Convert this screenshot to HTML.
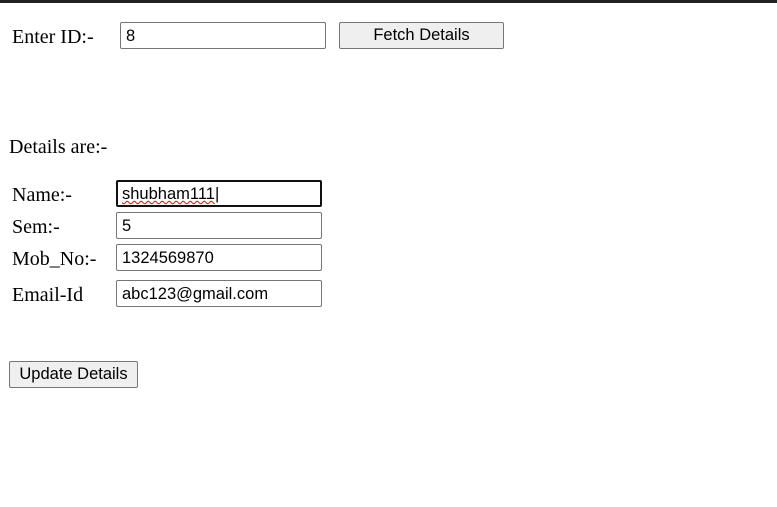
<!DOCTYPE html>
<html><head><style>
body{margin:0;width:777px;height:507px;background:#fff;position:relative;overflow:hidden;font-family:"Liberation Serif",serif;font-size:20px;color:#000}
.bar{position:absolute;left:0;top:0;width:777px;height:3px;background:#222}
.l{position:absolute;line-height:22px}
.i{position:absolute;box-sizing:border-box;border:1px solid #767676;border-radius:2px;background:#fff;font-family:"Liberation Sans",sans-serif;font-size:16.5px;padding:0 5px;line-height:26px;height:27px;color:#000}
.b{position:absolute;box-sizing:border-box;border:1px solid #767676;border-radius:2px;background:#efefef;font-family:"Liberation Sans",sans-serif;font-size:16.5px;text-align:center;line-height:25px;height:27px}
</style></head><body>
<div class="bar"></div>
<div class="l" style="left:12px;top:26px">Enter ID:-</div>
<div class="i" style="left:120px;top:22px;width:206px">8</div>
<div class="b" style="left:339px;top:22px;width:165px">Fetch Details</div>
<div class="l" style="left:9px;top:136px">Details are:-</div>
<div class="l" style="left:12px;top:184px">Name:-</div>
<div class="i" style="left:116px;top:180px;width:206px;border:2px solid #101010;padding-left:4px;line-height:24px"><span style="text-decoration:underline wavy red;text-decoration-thickness:1px">shubham111</span>|</div>
<div class="l" style="left:12px;top:216px">Sem:-</div>
<div class="i" style="left:116px;top:212px;width:206px">5</div>
<div class="l" style="left:12px;top:248px">Mob_No:-</div>
<div class="i" style="left:116px;top:244px;width:206px">1324569870</div>
<div class="l" style="left:12px;top:284px">Email-Id</div>
<div class="i" style="left:116px;top:280px;width:206px">abc123@gmail.com</div>
<div class="b" style="left:9px;top:361px;width:129px">Update Details</div>
</body></html>
